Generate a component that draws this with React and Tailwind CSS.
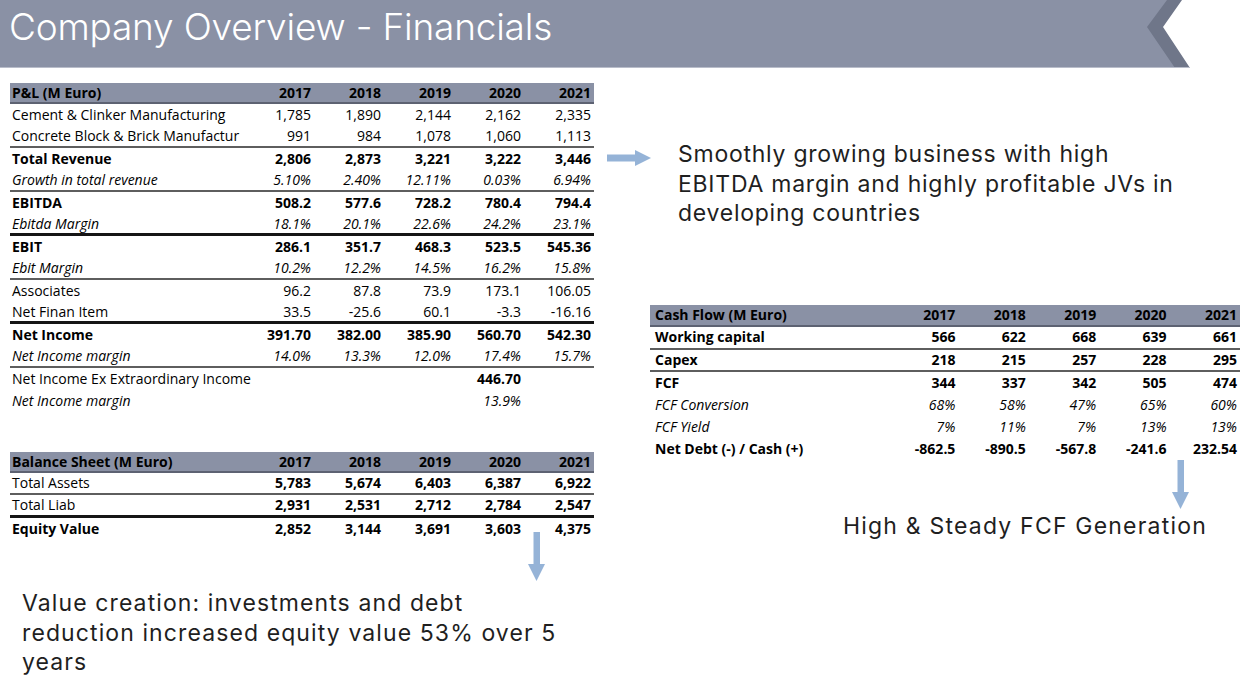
import React from "react";

const GRAY = "border-b-2 border-[#5e5e5e]";
const BLACK = "border-b-[3px] border-[#151515]";

function PLRow({ label, vals, type = "n", border = "", h = "h-[22px]", cols = "grid-cols-[234px_repeat(5,70px)]", lpad = "pl-[2px]" }) {
  const labelCls =
    type === "b" ? "font-bold" : type === "i" ? "italic" : "";
  const valCls = type === "b" ? "font-bold" : type === "i" ? "italic" : "";
  return (
    <div className={`grid ${cols} items-center ${h} ${border}`}>
      <div className={`${lpad} whitespace-nowrap ${labelCls}`}>{label}</div>
      {vals.map((v, i) => (
        <div key={i} className={`text-right pr-[3px] whitespace-nowrap ${typeof v === "object" ? v.cls : valCls}`}>
          {typeof v === "object" ? v.t : v}
        </div>
      ))}
    </div>
  );
}

function HeaderRow({ label, cols = "grid-cols-[234px_repeat(5,70px)]", h = "h-[21px]", lpad = "pl-[2px]" }) {
  return (
    <div className={`grid ${cols} items-center ${h} bg-[#8a91a5] border-b-2 border-[#5d6272] font-bold`}>
      <div className={`${lpad} whitespace-nowrap`}>{label}</div>
      {["2017", "2018", "2019", "2020", "2021"].map((y) => (
        <div key={y} className="text-right pr-[3px]">{y}</div>
      ))}
    </div>
  );
}

function RightArrow() {
  return (
    <svg width="44" height="16" viewBox="0 0 44 16" className="block shrink-0">
      <rect x="0" y="4.5" width="30" height="7" fill="#95b3d7" />
      <polygon points="28,0 44,8 28,16" fill="#95b3d7" />
    </svg>
  );
}

function DownArrow() {
  return (
    <svg width="17" height="49" viewBox="0 0 17 49" className="block">
      <rect x="5.5" y="0" width="6.5" height="34" fill="#95b3d7" />
      <polygon points="0,32 17,32 8.5,49" fill="#95b3d7" />
    </svg>
  );
}

const CF = "grid-cols-[238px_repeat(5,70.4px)]";

export default function App() {
  return (
    <div className="w-[1248px] h-[686px] bg-white overflow-hidden flex flex-col text-black">
      {/* Title bar */}
      <div className="flex h-[68px] shrink-0">
        <div className="w-[1147px] bg-[#8a91a5] pl-[9px] pt-[4px] border-b border-[#b9bdca]">
          <div className="font-['Inter',sans-serif] font-light text-[37px] leading-[46px] text-white tracking-[-0.2px]">
            Company Overview - Financials
          </div>
        </div>
        <svg width="45" height="68" viewBox="0 0 45 68" className="block">
          <polygon points="0,0 35,0 16,27 43,68 0,68" fill="#6f7689" />
          <polygon points="0,0 20,0 0,27 28,68 0,68" fill="#8a91a5" />
          <line x1="0" y1="67.5" x2="43" y2="67.5" stroke="#b9bdca" strokeWidth="1" />
        </svg>
      </div>

      <div className="flex flex-1">
        {/* Left column */}
        <div className="w-[607px] shrink-0 pl-[10px] pt-[15px]">
          <div className="w-[584px] font-['Open_Sans',sans-serif] text-[14px] leading-none">
            <HeaderRow label="P&L (M Euro)" />
            <PLRow label="Cement & Clinker Manufacturing" vals={["1,785", "1,890", "2,144", "2,162", "2,335"]} />
            <PLRow label="Concrete Block & Brick Manufactur" vals={["991", "984", "1,078", "1,060", "1,113"]} border={GRAY} />
            <PLRow label="Total Revenue" type="b" vals={["2,806", "2,873", "3,221", "3,222", "3,446"]} />
            <PLRow label="Growth in total revenue" type="i" vals={["5.10%", "2.40%", "12.11%", "0.03%", "6.94%"]} border={GRAY} />
            <PLRow label="EBITDA" type="b" vals={["508.2", "577.6", "728.2", "780.4", "794.4"]} />
            <PLRow label="Ebitda Margin" type="i" vals={["18.1%", "20.1%", "22.6%", "24.2%", "23.1%"]} border={BLACK} />
            <PLRow label="EBIT" type="b" vals={["286.1", "351.7", "468.3", "523.5", "545.36"]} />
            <PLRow label="Ebit Margin" type="i" vals={["10.2%", "12.2%", "14.5%", "16.2%", "15.8%"]} border={GRAY} />
            <PLRow label="Associates" vals={["96.2", "87.8", "73.9", "173.1", "106.05"]} />
            <PLRow label="Net Finan Item" vals={["33.5", "-25.6", "60.1", "-3.3", "-16.16"]} border={BLACK} />
            <PLRow label="Net Income" type="b" vals={["391.70", "382.00", "385.90", "560.70", "542.30"]} />
            <PLRow label="Net Income margin" type="i" vals={["14.0%", "13.3%", "12.0%", "17.4%", "15.7%"]} border={GRAY} />
            <PLRow label="Net Income Ex Extraordinary Income" vals={["", "", "", { t: "446.70", cls: "font-bold" }, ""]} />
            <PLRow label="Net Income margin" type="i" vals={["", "", "", "13.9%", ""]} />
          </div>

          <div className="w-[584px] mt-[40px] font-['Open_Sans',sans-serif] text-[14px] leading-none">
            <HeaderRow label="Balance Sheet (M Euro)" />
            <PLRow label="Total Assets" vals={[5783, 5674, 6403, 6387, 6922].map((n) => ({ t: n.toLocaleString("en-US"), cls: "font-bold" }))} border={GRAY} />
            <PLRow label="Total Liab" h="h-[23px]" vals={[2931, 2531, 2712, 2784, 2547].map((n) => ({ t: n.toLocaleString("en-US"), cls: "font-bold" }))} border={BLACK} />
            <PLRow label="Equity Value" type="b" vals={["2,852", "3,144", "3,691", "3,603", "4,375"]} />
          </div>

          <div className="ml-[518px] -mt-[8px]">
            <DownArrow />
          </div>

          <div className="ml-[12px] mt-[8px] font-['Inter',sans-serif] text-[23px] leading-[29.5px] tracking-[1.1px] text-[#1f1f1f] whitespace-nowrap">
            Value creation: investments and debt
            <br />
            reduction increased equity value 53% over 5
            <br />
            years
          </div>
        </div>

        {/* Right column */}
        <div className="flex-1 flex flex-col">
          <div className="flex items-start pt-[72px]">
            <div className="mt-[10px]">
              <RightArrow />
            </div>
            <div className="ml-[27px] font-['Inter',sans-serif] text-[23px] leading-[29.5px] tracking-[0.75px] text-[#1f1f1f] whitespace-nowrap">
              Smoothly growing business with high
              <br />
              EBITDA margin and highly profitable JVs in
              <br />
              developing countries
            </div>
          </div>

          <div className="ml-[43px] mt-[76px] w-[590px] font-['Open_Sans',sans-serif] text-[14px] leading-none">
            <HeaderRow label="Cash Flow (M Euro)" cols={CF} h="h-[22px]" lpad="pl-[5px]" />
            <PLRow label="Working capital" type="b" h="h-[23px]" cols={CF} lpad="pl-[5px]" vals={["566", "622", "668", "639", "661"]} border={GRAY} />
            <PLRow label="Capex" type="b" cols={CF} lpad="pl-[5px]" vals={["218", "215", "257", "228", "295"]} border={GRAY} />
            <PLRow label="FCF" type="b" cols={CF} lpad="pl-[5px]" vals={["344", "337", "342", "505", "474"]} />
            <PLRow label="FCF Conversion" type="i" cols={CF} lpad="pl-[5px]" vals={["68%", "58%", "47%", "65%", "60%"]} />
            <PLRow label="FCF Yield" type="i" cols={CF} lpad="pl-[5px]" vals={["7%", "11%", "7%", "13%", "13%"]} />
            <PLRow label="Net Debt (-) / Cash (+)" type="b" cols={CF} lpad="pl-[5px]" vals={["-862.5", "-890.5", "-567.8", "-241.6", "232.54"]} />
          </div>

          <div className="ml-[565px]">
            <DownArrow />
          </div>

          <div className="ml-[236px] mt-[2px] font-['Inter',sans-serif] text-[23px] leading-[30px] tracking-[1.2px] text-[#1f1f1f] whitespace-nowrap">
            High &amp; Steady FCF Generation
          </div>
        </div>
      </div>
    </div>
  );
}
